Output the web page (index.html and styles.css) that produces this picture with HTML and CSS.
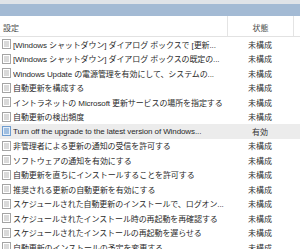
FILE: index.html
```html
<!DOCTYPE html>
<html lang="ja">

<head>
    <meta charset="UTF-8">
    <meta name="viewport" content="width=device-width, initial-scale=1.0">
    <title>Windows Update</title>
    <link rel="stylesheet" href="styles.css">
</head>

<body>

    <div class="top-strip"></div>
    <div class="blue-band"></div>

    <div class="list">
        <div class="list-head">
            <div class="col-name">設定</div>
            <div class="col-state">状態</div>
            <div class="col-rest"></div>
        </div>

        <div class="row">
            <span class="icon"><svg width="9" height="10" viewBox="0 0 9 10"><rect x="0.5" y="0.5" width="8" height="9" fill="#fff" stroke="#a4a4a4"/><path d="M2 3h5M2 5h5M2 7h5" stroke="#b4b4b4"/></svg></span>
            <span class="name">[Windows シャットダウン] ダイアログ ボックスで [更新...</span>
            <span class="state">未構成</span>
        </div>
        <div class="row">
            <span class="icon"><svg width="9" height="10" viewBox="0 0 9 10"><rect x="0.5" y="0.5" width="8" height="9" fill="#fff" stroke="#a4a4a4"/><path d="M2 3h5M2 5h5M2 7h5" stroke="#b4b4b4"/></svg></span>
            <span class="name">[Windows シャットダウン] ダイアログ ボックスの既定の...</span>
            <span class="state">未構成</span>
        </div>
        <div class="row">
            <span class="icon"><svg width="9" height="10" viewBox="0 0 9 10"><rect x="0.5" y="0.5" width="8" height="9" fill="#fff" stroke="#a4a4a4"/><path d="M2 3h5M2 5h5M2 7h5" stroke="#b4b4b4"/></svg></span>
            <span class="name">Windows Update の電源管理を有効にして、システムの...</span>
            <span class="state">未構成</span>
        </div>
        <div class="row">
            <span class="icon"><svg width="9" height="10" viewBox="0 0 9 10"><rect x="0.5" y="0.5" width="8" height="9" fill="#fff" stroke="#a4a4a4"/><path d="M2 3h5M2 5h5M2 7h5" stroke="#b4b4b4"/></svg></span>
            <span class="name">自動更新を構成する</span>
            <span class="state">未構成</span>
        </div>
        <div class="row">
            <span class="icon"><svg width="9" height="10" viewBox="0 0 9 10"><rect x="0.5" y="0.5" width="8" height="9" fill="#fff" stroke="#a4a4a4"/><path d="M2 3h5M2 5h5M2 7h5" stroke="#b4b4b4"/></svg></span>
            <span class="name">イントラネットの Microsoft 更新サービスの場所を指定する</span>
            <span class="state">未構成</span>
        </div>
        <div class="row">
            <span class="icon"><svg width="9" height="10" viewBox="0 0 9 10"><rect x="0.5" y="0.5" width="8" height="9" fill="#fff" stroke="#a4a4a4"/><path d="M2 3h5M2 5h5M2 7h5" stroke="#b4b4b4"/></svg></span>
            <span class="name">自動更新の検出頻度</span>
            <span class="state">未構成</span>
        </div>
        <div class="row selected">
            <span class="icon"><svg width="9" height="10" viewBox="0 0 9 10"><rect x="0.5" y="0.5" width="8" height="9" fill="#e4eef8" stroke="#6e9ccf"/><path d="M2 3h5M2 5h5M2 7h5" stroke="#5b8fc9"/></svg></span>
            <span class="name">Turn off the upgrade to the latest version of Windows...</span>
            <span class="state">有効</span>
        </div>
        <div class="row">
            <span class="icon"><svg width="9" height="10" viewBox="0 0 9 10"><rect x="0.5" y="0.5" width="8" height="9" fill="#fff" stroke="#a4a4a4"/><path d="M2 3h5M2 5h5M2 7h5" stroke="#b4b4b4"/></svg></span>
            <span class="name">非管理者による更新の通知の受信を許可する</span>
            <span class="state">未構成</span>
        </div>
        <div class="row">
            <span class="icon"><svg width="9" height="10" viewBox="0 0 9 10"><rect x="0.5" y="0.5" width="8" height="9" fill="#fff" stroke="#a4a4a4"/><path d="M2 3h5M2 5h5M2 7h5" stroke="#b4b4b4"/></svg></span>
            <span class="name">ソフトウェアの通知を有効にする</span>
            <span class="state">未構成</span>
        </div>
        <div class="row">
            <span class="icon"><svg width="9" height="10" viewBox="0 0 9 10"><rect x="0.5" y="0.5" width="8" height="9" fill="#fff" stroke="#a4a4a4"/><path d="M2 3h5M2 5h5M2 7h5" stroke="#b4b4b4"/></svg></span>
            <span class="name">自動更新を直ちにインストールすることを許可する</span>
            <span class="state">未構成</span>
        </div>
        <div class="row">
            <span class="icon"><svg width="9" height="10" viewBox="0 0 9 10"><rect x="0.5" y="0.5" width="8" height="9" fill="#fff" stroke="#a4a4a4"/><path d="M2 3h5M2 5h5M2 7h5" stroke="#b4b4b4"/></svg></span>
            <span class="name">推奨される更新の自動更新を有効にする</span>
            <span class="state">未構成</span>
        </div>
        <div class="row">
            <span class="icon"><svg width="9" height="10" viewBox="0 0 9 10"><rect x="0.5" y="0.5" width="8" height="9" fill="#fff" stroke="#a4a4a4"/><path d="M2 3h5M2 5h5M2 7h5" stroke="#b4b4b4"/></svg></span>
            <span class="name">スケジュールされた自動更新のインストールで、ログオン...</span>
            <span class="state">未構成</span>
        </div>
        <div class="row">
            <span class="icon"><svg width="9" height="10" viewBox="0 0 9 10"><rect x="0.5" y="0.5" width="8" height="9" fill="#fff" stroke="#a4a4a4"/><path d="M2 3h5M2 5h5M2 7h5" stroke="#b4b4b4"/></svg></span>
            <span class="name">スケジュールされたインストール時の再起動を再確認する</span>
            <span class="state">未構成</span>
        </div>
        <div class="row">
            <span class="icon"><svg width="9" height="10" viewBox="0 0 9 10"><rect x="0.5" y="0.5" width="8" height="9" fill="#fff" stroke="#a4a4a4"/><path d="M2 3h5M2 5h5M2 7h5" stroke="#b4b4b4"/></svg></span>
            <span class="name">スケジュールされたインストールの再起動を遅らせる</span>
            <span class="state">未構成</span>
        </div>
        <div class="row">
            <span class="icon"><svg width="9" height="10" viewBox="0 0 9 10"><rect x="0.5" y="0.5" width="8" height="9" fill="#fff" stroke="#a4a4a4"/><path d="M2 3h5M2 5h5M2 7h5" stroke="#b4b4b4"/></svg></span>
            <span class="name">自動更新のインストールの予定を変更する</span>
            <span class="state">未構成</span>
        </div>
    </div>

</body>

</html>
```

FILE: styles.css
```css
body {
    margin: 0;
    width: 300px;
    height: 249px;
    overflow: hidden;
    background: #fff;
    font-family: "Liberation Sans", "Noto Sans CJK JP", sans-serif;
    font-size: 8px;
    color: #2a2a2a;
}

.top-strip {
    height: 4px;
    background: #dfe3e8;
}

.blue-band {
    height: 12px;
    background: #a3bad4;
}

.list-head {
    display: flex;
    height: 20px;
    align-items: stretch;
    border-bottom: 1px solid #e2e2e2;
    color: #4a4a4a;
}

.list-head > div {
    display: flex;
    align-items: center;
    padding-top: 3px;
}

.col-name {
    width: 224px;
    padding-left: 3px;
    border-right: 1px solid #e4e4e4;
}

.col-state {
    width: 65px;
    justify-content: center;
    border-right: 1px solid #e4e4e4;
}

.col-rest {
    flex: 1;
}

.row {
    display: flex;
    align-items: center;
    height: 14.5px;
    white-space: nowrap;
}

.row.selected {
    background: #ececec;
}

.icon {
    width: 9px;
    height: 10px;
    margin-left: 2px;
    margin-right: 2px;
    display: flex;
}

.name {
    width: 214px;
    overflow: hidden;
    letter-spacing: -0.1px;
}

.state {
    width: 66px;
    text-align: center;
    color: #333;
}
```
